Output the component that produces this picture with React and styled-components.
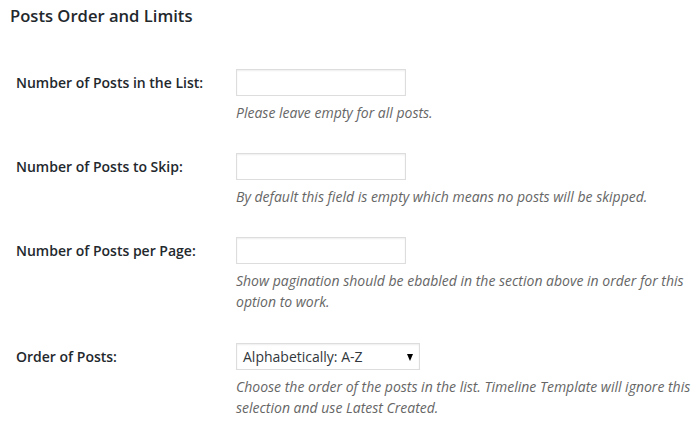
import React from "react";
import styled, { createGlobalStyle } from "styled-components";

const Global = createGlobalStyle`
  html, body { margin: 0; padding: 0; background: #ffffff; }
  body { font-family: "Open Sans", "Liberation Sans", sans-serif; color: #23282d; }
`;

const Page = styled.div`
  width: 695px;
  height: 431px;
  overflow: hidden;
  background: #ffffff;
  box-sizing: border-box;
  padding: 4px 0 0 0;
`;

const Title = styled.h2`
  margin: 0 0 0 10px;
  font-size: 16.6px;
  line-height: 23px;
  font-weight: 600;
  color: #23282d;
`;

const Table = styled.div`
  display: flex;
  flex-direction: column;
  padding-top: 42px;
`;

const Row = styled.div`
  display: grid;
  grid-template-columns: 236px 1fr;
  padding-bottom: ${(p) => p.$gap || 30}px;
`;

const Label = styled.label`
  padding: 4px 0 0 16px;
  font-size: 14px;
  line-height: 19px;
  font-weight: 600;
  color: #23282d;
`;

const Field = styled.div`
  display: flex;
  flex-direction: column;
  align-items: flex-start;
  padding-right: 4px;
`;

const Input = styled.input`
  box-sizing: border-box;
  width: 170px;
  height: 27px;
  margin: 0;
  padding: 3px 5px;
  border: 1px solid #dddddd;
  box-shadow: inset 0 1px 2px rgba(0, 0, 0, 0.07);
  background: #ffffff;
  font-family: inherit;
  font-size: 14px;
  outline: none;
`;

const SelectBox = styled.div`
  position: relative;
  box-sizing: border-box;
  width: 184px;
  height: 27px;
  border: 1px solid #dddddd;
  box-shadow: inset 0 1px 2px rgba(0, 0, 0, 0.07);
  background: #ffffff;
  display: flex;
  align-items: center;
  padding: 0 0 0 6px;
  font-size: 14px;
  color: #32373c;
`;

const Arrow = styled.span`
  position: absolute;
  right: 6px;
  top: 10px;
  width: 0;
  height: 0;
  border-left: 3.5px solid transparent;
  border-right: 3.5px solid transparent;
  border-top: 7px solid #000;
`;

const Desc = styled.p`
  margin: 6px 0 0 0;
  font-size: 14px;
  line-height: 21px;
  font-style: italic;
  color: #666666;
`;

const rows = [
  { label: "Number of Posts in the List:", desc: "Please leave empty for all posts." },
  { label: "Number of Posts to Skip:", desc: "By default this field is empty which means no posts will be skipped." },
  { label: "Number of Posts per Page:", desc: "Show pagination should be ebabled in the section above in order for this option to work.", gap: 31 },
];

export default function App() {
  return (
    <Page>
      <Global />
      <Title>Posts Order and Limits</Title>
      <Table>
        {rows.map((r) => (
          <Row key={r.label} $gap={r.gap}>
            <Label>{r.label}</Label>
            <Field>
              <Input type="text" />
              <Desc>{r.desc}</Desc>
            </Field>
          </Row>
        ))}
        <Row>
          <Label>Order of Posts:</Label>
          <Field>
            <SelectBox>
              Alphabetically: A-Z
              <Arrow />
            </SelectBox>
            <Desc>
              Choose the order of the posts in the list. Timeline Template will ignore this selection and use Latest Created.
            </Desc>
          </Field>
        </Row>
      </Table>
    </Page>
  );
}
